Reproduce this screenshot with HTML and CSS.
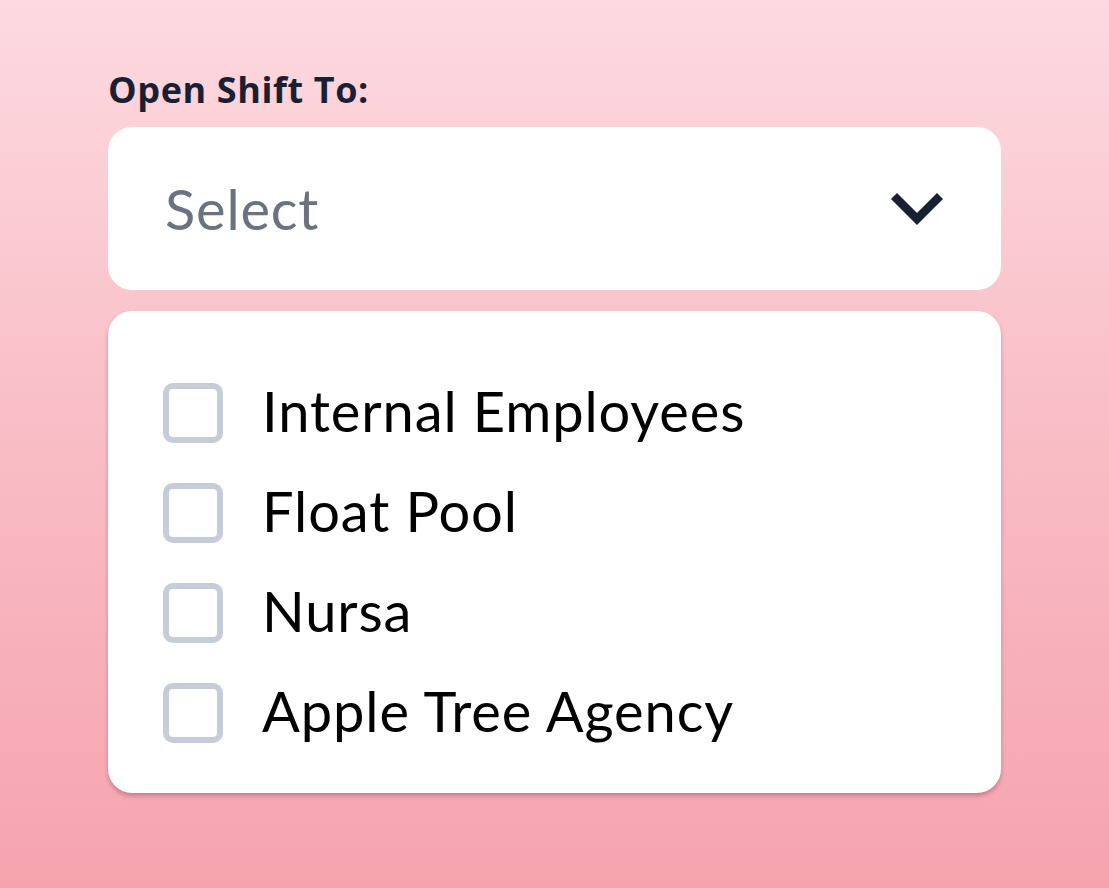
FILE: index.html
```html
<!DOCTYPE html>
<html>
<head>
<meta charset="utf-8">
<link rel="stylesheet" href="styles.css">
</head>
<body>
<div class="field">
  <div class="label">Open Shift To:</div>
  <div class="select">
    <span class="placeholder">Select</span>
    <svg class="chevron" width="54" height="34" viewBox="0 0 54 34"><path d="M4 4 L27 27 L50 4" fill="none" stroke="#1a2033" stroke-width="8.5" stroke-linecap="butt" stroke-linejoin="miter"/></svg>
  </div>
  <div class="panel">
    <label class="option"><span class="box"></span><span class="text">Internal Employees</span></label>
    <label class="option"><span class="box"></span><span class="text">Float Pool</span></label>
    <label class="option"><span class="box"></span><span class="text">Nursa</span></label>
    <label class="option"><span class="box"></span><span class="text">Apple Tree Agency</span></label>
  </div>
</div>
</body>
</html>
```

FILE: styles.css
```css
html, body {
  margin: 0;
  padding: 0;
}
body {
  width: 1109px;
  height: 888px;
  background: linear-gradient(to bottom, #fddae0 0%, #f9bfc8 45%, #f6a3ae 100%);
  font-family: "Lato", "Noto Sans", sans-serif;
  overflow: hidden;
}
.field {
  padding: 64px 108px 0 108px;
  display: flex;
  flex-direction: column;
}
.label {
  font-family: "Open Sans", "Lato", sans-serif;
  font-size: 36px;
  font-weight: 700;
  color: #1a1f33;
  line-height: 52px;
  letter-spacing: 0.6px;
  margin-bottom: 11px;
}
.select {
  height: 163px;
  background: #fff;
  border-radius: 24px;
  display: flex;
  align-items: center;
  justify-content: space-between;
  padding: 0 57px 0 57px;
}
.placeholder {
  font-size: 56px;
  color: #6b7381;
  line-height: 1;
  letter-spacing: 0.8px;
}
.chevron {
  display: block;
}
.panel {
  margin-top: 21px;
  background: #fff;
  border-radius: 24px;
  box-shadow: 0 3px 4px rgba(120, 50, 60, 0.35);
  padding: 72px 55px 50px 55px;
  display: flex;
  flex-direction: column;
  gap: 40px;
}
.option {
  display: flex;
  align-items: center;
  height: 60px;
}
.box {
  width: 48px;
  height: 48px;
  border: 6px solid #c6cdd6;
  border-radius: 10px;
  flex: none;
}
.text {
  margin-left: 39px;
  font-size: 56px;
  color: #000;
  line-height: 1;
  letter-spacing: 0.9px;
  margin-top: -4px;
}
```
